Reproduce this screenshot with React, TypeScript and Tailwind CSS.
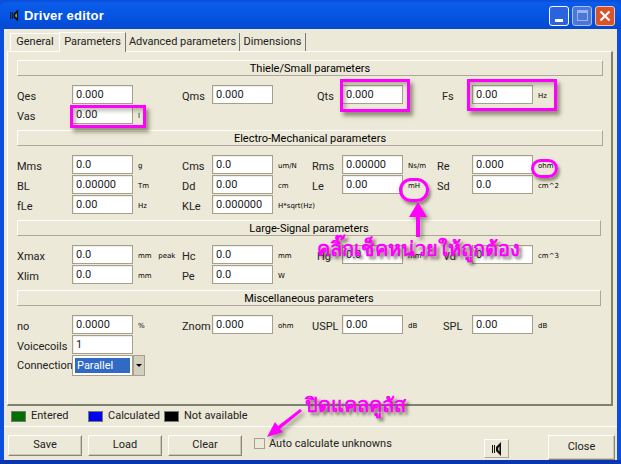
const font = { fontFamily: 'Roboto, "Liberation Sans", sans-serif' };

function Speaker({ className }: { className: string }) {
  return (
    <svg viewBox="0 0 10 14" className={className}>
      <path d="M0 3h1v8H0zM2 3h1v8H2z" fill="currentColor" />
      <path d="M4 5l5-5v14l-5-5z" fill="currentColor" />
      <path d="M6 6l1.5-1.5v5L6 8z" fill="#bbbbbb" />
    </svg>
  );
}

function Header({ title, w }: { title: string; w: string }) {
  return (
    <div className={`h-[16px] ml-[9px] border border-b-[#aca899] border-r-[#aca899] border-t-white border-l-white flex items-center justify-center text-[11px] leading-none text-black bg-[#ece9d8] ${w}`}>
      {title}
    </div>
  );
}

function Input({ value }: { value: string }) {
  return (
    <div className="h-[19px] w-[61px] shrink-0 bg-white border border-[#a5a08c] pl-[3px] text-[11px] leading-[17px] text-[#222] shadow-[inset_1px_1px_0_#f0eee4]">
      {value}
    </div>
  );
}

function Unit({ text, w }: { text: string; w: string }) {
  return (
    <div className={`text-[7px] leading-none pl-[5px] pt-[8px] text-black whitespace-pre shrink-0 ${w}`} style={{ fontFamily: '"DejaVu Sans", sans-serif' }}>
      {text}
    </div>
  );
}

type Cell = [string, string, string, string?];

const labelW = ["w-[55px]", "w-[30px]", "w-[30px]", "w-[35px]"];
const unitW = ["w-[49px]", "w-[39px]", "w-[34px]", "w-[60px]"];

function Row({ cells }: { cells: Cell[] }) {
  return (
    <div className="flex h-[19px] pl-[17px]">
      {cells.map((c, i) => (
        <div key={i} className="flex">
          <div className={`${labelW[i]} ${c[3] ?? ""} shrink-0 text-[11px] leading-[24px] text-[#222] whitespace-nowrap`}>{c[0]}</div>
          <Input value={c[1]} />
          <Unit text={c[2]} w={unitW[i]} />
        </div>
      ))}
    </div>
  );
}

function XpButton({ label, className }: { label: string; className: string }) {
  return (
    <div className={`flex items-center justify-center border border-t-white border-l-white border-b-[#8a8778] border-r-[#8a8778] bg-[#ece9d8] text-[11px] text-[#222] shadow-[inset_-1px_-1px_0_#c9c6b4] ${className}`}>
      {label}
    </div>
  );
}

function Legend({ color, label, w }: { color: string; label: string; w: string }) {
  return (
    <div className={`flex items-center gap-[5px] ${w}`}>
      <div className={`w-[15px] h-[11px] border border-[#777] ${color}`} />
      <span className="text-[11px] text-[#222] whitespace-nowrap">{label}</span>
    </div>
  );
}

const pinkBox = "absolute border-[3px] border-[#ff00ff] shadow-[3px_4px_4px_rgba(70,70,40,0.55),inset_3px_3px_4px_rgba(70,70,40,0.35)]";
const pinkOval = "absolute border-[3px] border-[#ff00ff] rounded-full shadow-[2px_3px_3px_rgba(70,70,40,0.55)]";
const pinkText = { fontFamily: '"Liberation Sans", "Noto Sans", sans-serif', textShadow: "3px 3px 3px rgba(60,60,40,0.6)" };

export default function App() {
  return (
    <div className="relative w-[621px] h-[464px] overflow-hidden bg-[#0a50dc] pt-[2px]" style={font}>
      {/* title bar */}
      <div className="h-[27px] px-[10px] flex items-center justify-between bg-gradient-to-b from-[#0b5ce8] via-[#0555e3] to-[#0548d0] rounded-t-[6px]">
        <div className="flex items-center gap-[5px] text-white">
          <Speaker className="w-[9px] h-[13px] text-[#111]" />
          <span className="text-[13px] font-bold tracking-[0.2px]" style={{ fontFamily: '"Liberation Sans", sans-serif' }}>Driver editor</span>
        </div>
        <div className="flex gap-[3px] -mr-[4px]">
          <div className="w-[20px] h-[20px] rounded-[3px] border border-white bg-[#2a63e0] flex items-end justify-center pb-[3px]">
            <div className="w-[8px] h-[3px] bg-white" />
          </div>
          <div className="w-[20px] h-[20px] rounded-[3px] border border-[#a9bff0] bg-[#4a77d8] flex items-center justify-center">
            <div className="w-[11px] h-[11px] border border-[#9ab3ea] border-t-[3px]" />
          </div>
          <div className="w-[20px] h-[20px] rounded-[3px] border border-[#eec5b5] bg-[#d9532c] flex items-center justify-center text-white">
            <svg viewBox="0 0 12 12" className="w-[12px] h-[12px]"><path d="M1.5 1.5l9 9M10.5 1.5l-9 9" stroke="currentColor" strokeWidth="2.2" /></svg>
          </div>
        </div>
      </div>

      {/* client */}
      <div className="mx-[4px] h-[431px] bg-[#ece9d8] relative">
        {/* tabs */}
        <div className="h-[22px] flex items-end pl-[6px] text-[11px] text-[#222] whitespace-nowrap">
          <div className="h-[18px] w-[49px] flex items-center justify-center border-t border-l border-white">General</div>
          <div className="h-[20px] w-[67px] flex items-center justify-center border-t border-l border-white border-r border-r-[#777] -mb-px relative z-10 bg-[#ece9d8]">Parameters</div>
          <div className="h-[18px] w-[114px] flex items-center justify-center border-r border-r-[#777]">Advanced parameters</div>
          <div className="h-[18px] w-[66px] flex items-center justify-center border-r border-r-[#777]">Dimensions</div>
        </div>
        {/* panel */}
        <div className="ml-[3px] w-[606px] h-[355px] border border-t-white border-l-white border-r-[#808070] border-b-[#808070] border-r-2 border-b-2 pt-[8px] flex flex-col">
          <Header title="Thiele/Small parameters" w="w-[586px]" />
          <div className="-ml-[8px] pt-[9px] flex flex-col gap-[1px]">
            <Row cells={[["Qes", "0.000", ""], ["Qms", "0.000", ""], ["Qts", "0.000", "", "pl-[5px]"], ["Fs", "0.00", "Hz", "pl-[5px]"]]} />
            <Row cells={[["Vas", "0.00", "l"]]} />
          </div>
          <div className="pt-[6px]"><Header title="Electro-Mechanical parameters" w="w-[586px]" /></div>
          <div className="-ml-[8px] pt-[9px] flex flex-col gap-[1px]">
            <Row cells={[["Mms", "0.0", "g"], ["Cms", "0.0", "um/N"], ["Rms", "0.00000", "Ns/m"], ["Re", "0.000", "ohm"]]} />
            <Row cells={[["BL", "0.00000", "Tm"], ["Dd", "0.00", "cm"], ["Le", "0.00", "mH"], ["Sd", "0.0", "cm^2"]]} />
            <Row cells={[["fLe", "0.00", "Hz"], ["KLe", "0.000000", "H*sqrt(Hz)"]]} />
          </div>
          <div className="pt-[6px]"><Header title="Large-Signal parameters" w="w-[584px]" /></div>
          <div className="-ml-[8px] pt-[9px] flex flex-col gap-[1px]">
            <Row cells={[["Xmax", "0.0", "mm   peak"], ["Hc", "0.0", "mm"], ["Hg", "0.0", "mm", "pl-[5px]"], ["Vd", "0", "cm^3", "pl-[6px]"]]} />
            <Row cells={[["Xlim", "0.0", "mm"], ["Pe", "0.0", "W"]]} />
          </div>
          <div className="pt-[6px]"><Header title="Miscellaneous parameters" w="w-[584px]" /></div>
          <div className="-ml-[8px] pt-[9px] flex flex-col gap-[1px]">
            <Row cells={[["no", "0.0000", "%"], ["Znom", "0.000", "ohm"], ["USPL", "0.00", "dB"], ["SPL", "0.00", "dB", "pl-[6px]"]]} />
            <Row cells={[["Voicecoils", "1", ""]]} />
            <div className="flex h-[21px] pl-[17px]">
              <div className="w-[55px] text-[11px] leading-[22px] text-[#222]">Connection</div>
              <div className="w-[61px] h-[21px] bg-white border border-[#a5a08c] p-[2px]">
                <div className="h-full bg-[#316ac5] text-white text-[11px] leading-[15px] pl-[2px]">Parallel</div>
              </div>
              <div className="w-[12px] h-[21px] bg-[#d4d0c0] border border-[#a5a08c] flex items-center justify-center">
                <div className="w-0 h-0 border-l-[3px] border-r-[3px] border-t-[3px] border-l-transparent border-r-transparent border-t-black" />
              </div>
            </div>
          </div>
        </div>
        {/* legend */}
        <div className="h-[20px] flex items-center pl-[7px] pt-[1px]">
          <Legend color="bg-[#007000]" label="Entered" w="w-[77px]" />
          <Legend color="bg-[#0000f0]" label="Calculated" w="w-[76px]" />
          <Legend color="bg-black" label="Not available" w="w-[100px]" />
        </div>
        <div className="h-px bg-white" />
        {/* buttons */}
        <div className="flex pt-[8px] pl-[4px] relative">
          <div className="flex gap-[6px]">
            <XpButton label="Save" className="w-[74px] h-[21px]" />
            <XpButton label="Load" className="w-[74px] h-[21px]" />
            <XpButton label="Clear" className="w-[74px] h-[21px]" />
          </div>
          <div className="ml-[12px] flex items-start pt-[3px] gap-[4px]">
            <div className="w-[11px] h-[11px] border border-[#a5a08c] shrink-0" />
            <span className="text-[11px] leading-[11px] text-[#222] whitespace-nowrap">Auto calculate unknowns</span>
          </div>
          <div className="absolute left-[480px] top-[12px] w-[25px] h-[19px] border border-t-white border-l-white border-b-[#aca899] border-r-[#aca899] flex items-center justify-center">
            <Speaker className="w-[10px] h-[14px] text-[#111]" />
          </div>
          <XpButton label="Close" className="absolute left-[544px] top-[8px] w-[67px] h-[25px]" />
        </div>
      </div>
      <div className="absolute left-0 right-0 bottom-0 h-[4px] bg-[#0a35b0]" />

      {/* annotations */}
      <div className={`${pinkBox} left-[70px] top-[105px] w-[76px] h-[23px]`} />
      <div className={`${pinkBox} left-[340px] top-[79px] w-[70px] h-[33px]`} />
      <div className={`${pinkBox} left-[467px] top-[79px] w-[90px] h-[32px]`} />
      <div className={`${pinkOval} left-[531px] top-[159px] w-[27px] h-[19px]`} />
      <div className={`${pinkOval} left-[399px] top-[178px] w-[30px] h-[24px]`} />
      <svg className="absolute left-[400px] top-[198px] w-[40px] h-[48px] drop-shadow-[3px_3px_2px_rgba(60,60,40,0.5)]" viewBox="0 0 40 48">
        <path d="M18 4l9 15h-7v20h-4V19H9z" fill="#ff00ff" />
      </svg>
      <svg className="absolute left-[262px] top-[405px] w-[44px] h-[36px] drop-shadow-[3px_3px_2px_rgba(60,60,40,0.5)]" viewBox="0 0 44 36">
        <path d="M5 32l16-5-3-3L40 6l-2-2L16 21l-3-4z" fill="#ff00ff" />
      </svg>
      <div className="absolute left-[317px] top-[235px] text-[20px] font-bold leading-[28px] text-[#ff00ff] whitespace-nowrap" style={pinkText}>คลิ๊กเช็คหน่วยให้ถูกต้อง</div>
      <div className="absolute left-[305px] top-[393px] text-[20px] font-bold leading-[24px] text-[#ff00ff] whitespace-nowrap" style={pinkText}>ปิดแคลคูลัส</div>
    </div>
  );
}
